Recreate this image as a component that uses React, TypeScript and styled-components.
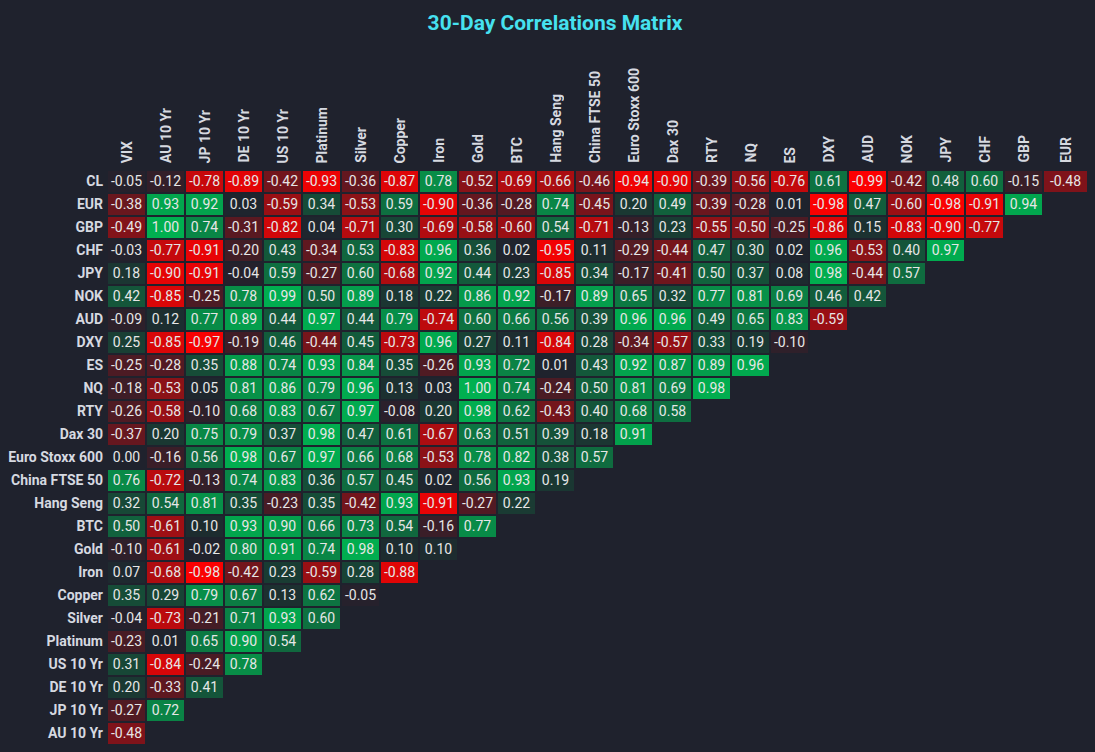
import React from "react";
import styled, { createGlobalStyle } from "styled-components";

const GlobalStyle = createGlobalStyle`
  html, body {
    margin: 0;
    padding: 0;
    background: #1f222d;
  }
  body {
    font-family: Roboto, "Liberation Sans", sans-serif;
  }
`;

const COLUMNS = [
  "VIX", "AU 10 Yr", "JP 10 Yr", "DE 10 Yr", "US 10 Yr", "Platinum", "Silver", "Copper",
  "Iron", "Gold", "BTC", "Hang Seng", "China FTSE 50", "Euro Stoxx 600", "Dax 30", "RTY",
  "NQ", "ES", "DXY", "AUD", "NOK", "JPY", "CHF", "GBP", "EUR",
];

const ROWS: [string, number[]][] = [
  ["CL", [-0.05, -0.12, -0.78, -0.89, -0.42, -0.93, -0.36, -0.87, 0.78, -0.52, -0.69, -0.66, -0.46, -0.94, -0.9, -0.39, -0.56, -0.76, 0.61, -0.99, -0.42, 0.48, 0.6, -0.15, -0.48]],
  ["EUR", [-0.38, 0.93, 0.92, 0.03, -0.59, 0.34, -0.53, 0.59, -0.9, -0.36, -0.28, 0.74, -0.45, 0.2, 0.49, -0.39, -0.28, 0.01, -0.98, 0.47, -0.6, -0.98, -0.91, 0.94]],
  ["GBP", [-0.49, 1.0, 0.74, -0.31, -0.82, 0.04, -0.71, 0.3, -0.69, -0.58, -0.6, 0.54, -0.71, -0.13, 0.23, -0.55, -0.5, -0.25, -0.86, 0.15, -0.83, -0.9, -0.77]],
  ["CHF", [-0.03, -0.77, -0.91, -0.2, 0.43, -0.34, 0.53, -0.83, 0.96, 0.36, 0.02, -0.95, 0.11, -0.29, -0.44, 0.47, 0.3, 0.02, 0.96, -0.53, 0.4, 0.97]],
  ["JPY", [0.18, -0.9, -0.91, -0.04, 0.59, -0.27, 0.6, -0.68, 0.92, 0.44, 0.23, -0.85, 0.34, -0.17, -0.41, 0.5, 0.37, 0.08, 0.98, -0.44, 0.57]],
  ["NOK", [0.42, -0.85, -0.25, 0.78, 0.99, 0.5, 0.89, 0.18, 0.22, 0.86, 0.92, -0.17, 0.89, 0.65, 0.32, 0.77, 0.81, 0.69, 0.46, 0.42]],
  ["AUD", [-0.09, 0.12, 0.77, 0.89, 0.44, 0.97, 0.44, 0.79, -0.74, 0.6, 0.66, 0.56, 0.39, 0.96, 0.96, 0.49, 0.65, 0.83, -0.59]],
  ["DXY", [0.25, -0.85, -0.97, -0.19, 0.46, -0.44, 0.45, -0.73, 0.96, 0.27, 0.11, -0.84, 0.28, -0.34, -0.57, 0.33, 0.19, -0.1]],
  ["ES", [-0.25, -0.28, 0.35, 0.88, 0.74, 0.93, 0.84, 0.35, -0.26, 0.93, 0.72, 0.01, 0.43, 0.92, 0.87, 0.89, 0.96]],
  ["NQ", [-0.18, -0.53, 0.05, 0.81, 0.86, 0.79, 0.96, 0.13, 0.03, 1.0, 0.74, -0.24, 0.5, 0.81, 0.69, 0.98]],
  ["RTY", [-0.26, -0.58, -0.1, 0.68, 0.83, 0.67, 0.97, -0.08, 0.2, 0.98, 0.62, -0.43, 0.4, 0.68, 0.58]],
  ["Dax 30", [-0.37, 0.2, 0.75, 0.79, 0.37, 0.98, 0.47, 0.61, -0.67, 0.63, 0.51, 0.39, 0.18, 0.91]],
  ["Euro Stoxx 600", [0.0, -0.16, 0.56, 0.98, 0.67, 0.97, 0.66, 0.68, -0.53, 0.78, 0.82, 0.38, 0.57]],
  ["China FTSE 50", [0.76, -0.72, -0.13, 0.74, 0.83, 0.36, 0.57, 0.45, 0.02, 0.56, 0.93, 0.19]],
  ["Hang Seng", [0.32, 0.54, 0.81, 0.35, -0.23, 0.35, -0.42, 0.93, -0.91, -0.27, 0.22]],
  ["BTC", [0.5, -0.61, 0.1, 0.93, 0.9, 0.66, 0.73, 0.54, -0.16, 0.77]],
  ["Gold", [-0.1, -0.61, -0.02, 0.8, 0.91, 0.74, 0.98, 0.1, 0.1]],
  ["Iron", [0.07, -0.68, -0.98, -0.42, 0.23, -0.59, 0.28, -0.88]],
  ["Copper", [0.35, 0.29, 0.79, 0.67, 0.13, 0.62, -0.05]],
  ["Silver", [-0.04, -0.73, -0.21, 0.71, 0.93, 0.6]],
  ["Platinum", [-0.23, 0.01, 0.65, 0.9, 0.54]],
  ["US 10 Yr", [0.31, -0.84, -0.24, 0.78]],
  ["DE 10 Yr", [0.2, -0.33, 0.41]],
  ["JP 10 Yr", [-0.27, 0.72]],
  ["AU 10 Yr", [-0.48]],
];

const BASE = [31, 34, 45];
const POS = [0, 176, 80];
const NEG = [255, 0, 0];

function cellColor(v: number): string {
  const t = Math.min(1, Math.pow(Math.abs(v), 1.15));
  const end = v >= 0 ? POS : NEG;
  const c = BASE.map((b, i) => Math.round(b + (end[i] - b) * t));
  return `rgb(${c[0]}, ${c[1]}, ${c[2]})`;
}

const GRID = `106px repeat(24, 37px) 43px`;

const Page = styled.div`
  width: 1095px;
  min-height: 752px;
  background: #1f222d;
  box-sizing: border-box;
`;

const Title = styled.h1`
  margin: 0;
  padding: 11px 0 0 15px;
  height: 35px;
  box-sizing: border-box;
  text-align: center;
  font-family: Roboto, "Liberation Sans", sans-serif;
  font-weight: 700;
  font-size: 21px;
  line-height: 24px;
  color: #46e1f0;
`;

const Matrix = styled.div`
  display: flex;
  flex-direction: column;
  gap: 2px;
`;

const HeaderRow = styled.div`
  display: grid;
  grid-template-columns: ${GRID};
  column-gap: 2px;
  height: 134px;
`;

const ColHeader = styled.div`
  display: flex;
  justify-content: center;
  align-items: flex-end;
  padding-bottom: 6px;
`;

const ColHeaderText = styled.span`
  writing-mode: vertical-rl;
  transform: rotate(180deg);
  white-space: nowrap;
  font-weight: 700;
  font-size: 14px;
  line-height: 16px;
  color: #d6d9e0;
`;

const Row = styled.div`
  display: grid;
  grid-template-columns: ${GRID};
  column-gap: 2px;
  height: 21px;
`;

const RowLabel = styled.div`
  text-align: right;
  padding-right: 3px;
  font-weight: 700;
  font-size: 14px;
  line-height: 21px;
  color: #d6d9e0;
  white-space: nowrap;
`;

const Cell = styled.div<{ $v: number }>`
  display: flex;
  align-items: center;
  justify-content: center;
  background: ${(p) => cellColor(p.$v)};
  color: #e6e6e6;
  font-size: 14px;
  line-height: 21px;
`;

function fmt(v: number): string {
  return v.toFixed(2);
}

export default function App() {
  return (
    <>
      <GlobalStyle />
      <Page>
        <Title>30-Day Correlations Matrix</Title>
        <Matrix>
          <HeaderRow>
            <div />
            {COLUMNS.map((c) => (
              <ColHeader key={c}>
                <ColHeaderText>{c}</ColHeaderText>
              </ColHeader>
            ))}
          </HeaderRow>
          {ROWS.map(([name, vals]) => (
            <Row key={name}>
              <RowLabel>{name}</RowLabel>
              {vals.map((v, i) => (
                <Cell key={i} $v={v}>
                  {fmt(v)}
                </Cell>
              ))}
            </Row>
          ))}
        </Matrix>
      </Page>
    </>
  );
}
